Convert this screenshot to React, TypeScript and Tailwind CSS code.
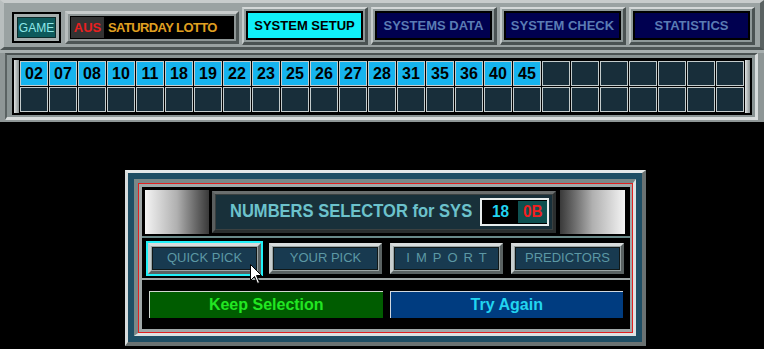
import React from "react";

const nums = ["02","07","08","10","11","18","19","22","23","25","26","27","28","31","35","36","40","45"];

function Tab({ label, active }: { label: string; active?: boolean }) {
  return (
    <div className="w-[126px] border-t-2 border-l-2 border-b-[3px] border-r-[3px] border-t-[#d4d8d8] border-l-[#c4caca] border-b-[#4a5252] border-r-[#4a5252] bg-[#8e9898] p-[2px]">
      <div className="border-2 border-black">
        <div
          className={
            active
              ? "h-[25px] flex items-center justify-center bg-[#10f0f8] text-black text-[13px] font-bold"
              : "h-[25px] flex items-center justify-center bg-[#000050] text-[#5a7cb4] text-[13px] font-bold"
          }
        >
          {label}
        </div>
      </div>
    </div>
  );
}

function Cell({ n }: { n?: string }) {
  return n ? (
    <div className="h-[25px] border border-[#c4cccc] bg-[#16b4ee] flex items-center justify-center text-black text-[16px] font-bold">
      {n}
    </div>
  ) : (
    <div className="h-[25px] border border-[#c4cccc] bg-[#182e3a]" />
  );
}

function PickBtn({ label, active, wide }: { label: string; active?: boolean; wide?: boolean }) {
  return (
    <div className={active ? "border-2 border-[#20f0f8] bg-black" : "border-2 border-transparent"}>
      <div className="border-t-[3px] border-l-[3px] border-b-[3px] border-r-[3px] border-t-[#d8dcdc] border-l-[#c8cece] border-b-[#5a6262] border-r-[#5a6262] bg-[#9aa4a4] p-[1px]">
        <div className="h-[23px] border border-[#101818] bg-[#183a50] flex items-center justify-center">
          <span className={wide ? "text-[13px] text-[#5c98a4] tracking-[6px] pl-[6px]" : "text-[13px] text-[#5c98a4]"}>{label}</span>
        </div>
      </div>
    </div>
  );
}

export default function App() {
  return (
    <div className="relative w-[764px] h-[349px] bg-black overflow-hidden font-['Liberation_Sans',Arial,sans-serif]">
      {/* top plate */}
      <div className="bg-[#8e9696]">
        {/* header */}
        <div className="h-[50px] border-t-[3px] border-l-[4px] border-r-[4px] border-b-[3px] border-t-[#c8cccc] border-l-[#b8bebe] border-r-[#5a6262] border-b-[#4e5656] bg-[#9aa2a2] flex items-start pt-[4px] pl-[8px] gap-[3px]">
          <div className="mt-[5px] w-[49px] h-[31px] border-2 border-black bg-[#a6aeae] p-[3px]">
            <div className="h-full border border-[#0c2a2a] bg-[#0e5a5c] flex items-center justify-center text-[12px] text-[#8ee8e8]">
              GAME
            </div>
          </div>
          <div className="mt-[4px] ml-[1px] w-[174px] h-[33px] border-t-[3px] border-l-[3px] border-b-[3px] border-r-[3px] border-t-[#c8cccc] border-l-[#b8bebe] border-b-[#4e5656] border-r-[#4e5656] bg-[#8e9696] p-[2px]">
            <div className="h-full border border-black bg-black flex">
              <div className="w-[33px] bg-[#333333] flex items-center justify-center text-[13px] font-bold text-[#e82020]">AUS</div>
              <div className="flex-1 flex items-center pl-[4px] text-[13px] font-bold text-[#e0a020] tracking-[-0.6px]">SATURDAY LOTTO</div>
            </div>
          </div>
          <div className="flex gap-[3px]">
            <Tab label="SYSTEM SETUP" active />
            <Tab label="SYSTEMS DATA" />
            <Tab label="SYSTEM CHECK" />
            <Tab label="STATISTICS" />
          </div>
        </div>
        {/* separator band */}
        <div className="h-[3px] bg-[#a8b0b0]" />
        {/* grid panel */}
        <div className="pl-[5px] pr-[6px] pb-[2px]">
          <div className="h-[67px] border-t-2 border-l-2 border-b-[3px] border-r-[3px] border-t-[#4a5252] border-l-[#5a6262] border-b-[#d8dcdc] border-r-[#d8dcdc] bg-[#8a9494] pt-[3px] pl-[5px]">
            <div className="w-[740px] border-2 border-black bg-black flex">
              <div className="w-[5px] bg-linear-to-r from-[#e0e4e4] to-[#8a9292]" />
              <div className="grid grid-cols-[repeat(25,28px)] gap-[1px] p-[1px] bg-black">
                {Array.from({ length: 25 }).map((_, i) => (
                  <Cell key={"a" + i} n={nums[i]} />
                ))}
                {Array.from({ length: 25 }).map((_, i) => (
                  <Cell key={"b" + i} />
                ))}
              </div>
              <div className="w-[5px] bg-linear-to-r from-[#e0e4e4] to-[#8a9292]" />
            </div>
          </div>
        </div>
      </div>

      {/* dialog */}
      <div className="mt-[48px] ml-[125px] w-[521px] h-[176px] border-t-[3px] border-l-[3px] border-b-[4px] border-r-[4px] border-t-[#e4e8e8] border-l-[#d8dcdc] border-b-[#6a7272] border-r-[#6a7272] bg-[#1e4e64] p-[6px]">
        <div className="h-full border-t-[4px] border-l-[4px] border-b-[3px] border-r-[3px] border-t-[#7a8888] border-l-[#7a8888] border-b-[#dde2e2] border-r-[#dde2e2] bg-[#8a9696]">
          <div className="h-full border border-[#e02020] p-[3px] pr-[2px] bg-[#a0a8a8]">
            <div className="h-full bg-black flex flex-col">
              {/* row 1 */}
              <div className="h-[51px] shrink-0 flex items-center pl-[3px] pr-[2px] gap-[2px] border-b-2 border-[#6a8a8a]">
                <div className="w-[64px] h-[44px] bg-linear-to-r from-[#f4f4f4] via-[#b0b0b0] to-[#3a3a3a]" />
                <div className="w-[344px] h-[42px] border-t-[3px] border-l-[3px] border-b-[3px] border-r-[3px] border-t-[#6a6e6e] border-l-[#5a5e5e] border-b-[#2a2e2e] border-r-[#2a2e2e] bg-[#3a4040] p-[1px] ml-[1px]">
                  <div className="h-full bg-[#18303a] flex items-center pl-[14px]">
                    <div className="w-[250px] whitespace-nowrap">
                      <span className="inline-block origin-left scale-x-[0.87] text-[19px] text-[#6cc2cc] font-bold">
                        NUMBERS SELECTOR for SYS
                      </span>
                    </div>
                    <div className="w-[69px] h-[28px] border-2 border-[#e8eeee] bg-black flex items-center pl-[9px] gap-[8px]">
                      <span className="inline-block scale-x-[0.9] text-[17px] font-bold text-[#22d4f0]">18</span>
                      <span className="h-[22px] w-[29px] bg-[#0e5050] flex items-center justify-center">
                        <span className="inline-block scale-x-[0.9] text-[17px] font-bold text-[#f02020]">0B</span>
                      </span>
                    </div>
                  </div>
                </div>
                <div className="ml-[2px] w-[65px] h-[44px] bg-linear-to-r from-[#3a3a3a] via-[#b0b0b0] to-[#f4f4f4]" />
              </div>
              {/* row 2 */}
              <div className="h-[42px] shrink-0 grid grid-cols-4 gap-[4px] items-center pl-[4px] pr-[4px] border-b-2 border-[#a0a8a8]">
                <PickBtn label="QUICK PICK" active />
                <PickBtn label="YOUR PICK" />
                <PickBtn label="IMPORT" wide />
                <PickBtn label="PREDICTORS" />
              </div>
              {/* row 3 */}
              <div className="flex-1 grid grid-cols-2 gap-[7px] items-center px-[7px]">
                <div className="h-[27px] border-t border-l border-[#d0d8d0] bg-[#005c00] flex items-center justify-center text-[16px] font-bold text-[#22e622]">
                  Keep Selection
                </div>
                <div className="h-[27px] border-t border-l border-[#d0d8e0] bg-[#003c80] flex items-center justify-center text-[16px] font-bold text-[#22d4f0]">
                  Try Again
                </div>
              </div>
            </div>
          </div>
        </div>
      </div>

      {/* mouse cursor */}
      <svg className="absolute left-[250px] top-[264px]" width="13" height="21" viewBox="0 0 13 21">
        <path d="M0.5 0.5 L0.5 16.5 L4.5 12.5 L7.5 19.5 L9.5 18.5 L6.5 11.5 L11.5 11.5 Z" fill="#ffffff" stroke="#000000" strokeWidth="1" />
      </svg>
    </div>
  );
}
